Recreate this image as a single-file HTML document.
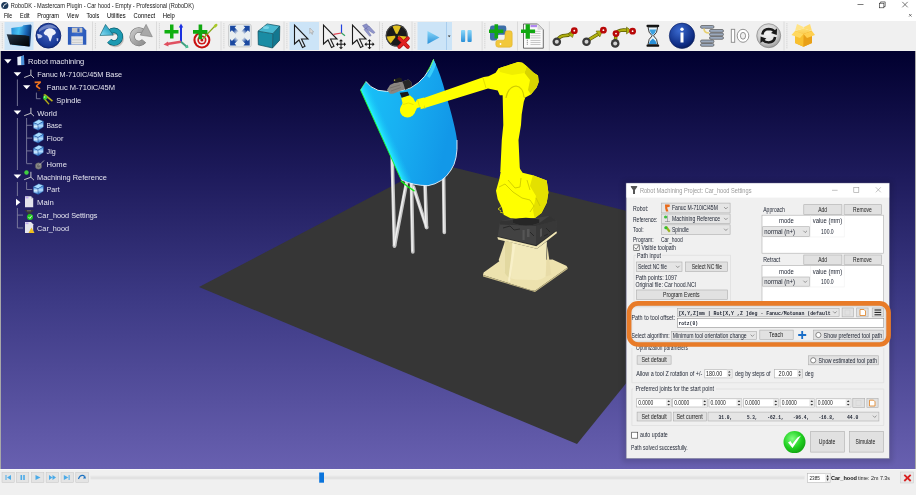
<!DOCTYPE html>
<html><head><meta charset="utf-8">
<style>
*{margin:0;padding:0;box-sizing:border-box}
html,body{width:916px;height:495px;overflow:hidden;background:#f0f0f0;font-family:"Liberation Sans",sans-serif}
svg{position:absolute;left:0;top:0;display:block;will-change:transform}
</style></head><body>
<svg width="916" height="495" viewBox="0 0 916 495">
<defs>
<linearGradient id="gVP" x1="0" y1="0" x2="0" y2="1"><stop offset="0" stop-color="#01002f"/><stop offset="0.3" stop-color="#1e1b5c"/><stop offset="0.6" stop-color="#3d3a85"/><stop offset="1" stop-color="#6860b0"/></linearGradient>

<linearGradient id="gFold" x1="0" y1="0.3" x2="1" y2="0.5"><stop offset="0" stop-color="#2a90d8"/><stop offset="0.35" stop-color="#48c4f4"/><stop offset="0.7" stop-color="#1a68b8"/><stop offset="1" stop-color="#0a2a60"/></linearGradient>
<linearGradient id="gFoldF" x1="0" y1="0" x2="1" y2="1"><stop offset="0" stop-color="#2a3848"/><stop offset="0.6" stop-color="#0c141c"/><stop offset="1" stop-color="#000"/></linearGradient>
<radialGradient id="gGlobe" cx="0.5" cy="0.45" r="0.6"><stop offset="0" stop-color="#3a5ab8"/><stop offset="0.75" stop-color="#1a3a98"/><stop offset="1" stop-color="#0c2470"/></radialGradient>
<linearGradient id="gFlop" x1="0" y1="0" x2="1" y2="0"><stop offset="0" stop-color="#2a58b8"/><stop offset="0.5" stop-color="#3a6ccc"/><stop offset="1" stop-color="#2a58b8"/></linearGradient>
<linearGradient id="gUndo" x1="0" y1="1" x2="1" y2="0"><stop offset="0" stop-color="#90e0f8"/><stop offset="0.5" stop-color="#40b0d0"/><stop offset="1" stop-color="#1a90a8"/></linearGradient>
<linearGradient id="gRedo" x1="0" y1="0" x2="1" y2="1"><stop offset="0" stop-color="#c8c8c8"/><stop offset="0.5" stop-color="#a8a8a8"/><stop offset="1" stop-color="#909090"/></linearGradient>
<linearGradient id="gCube" x1="0" y1="0" x2="1" y2="1"><stop offset="0" stop-color="#4cc0d8"/><stop offset="1" stop-color="#127890"/></linearGradient>
<radialGradient id="gInfo" cx="0.4" cy="0.3" r="0.75"><stop offset="0" stop-color="#3a6ad0"/><stop offset="0.8" stop-color="#0c2a80"/><stop offset="1" stop-color="#061a50"/></radialGradient>
<radialGradient id="gSync" cx="0.45" cy="0.4" r="0.65"><stop offset="0" stop-color="#ffffff"/><stop offset="0.6" stop-color="#d0d0d0"/><stop offset="1" stop-color="#909090"/></radialGradient>
<linearGradient id="gPlay" x1="0" y1="0" x2="0" y2="1"><stop offset="0" stop-color="#8ad8fa"/><stop offset="1" stop-color="#2a90d8"/></linearGradient>
<linearGradient id="gBox" x1="0" y1="0" x2="0" y2="1"><stop offset="0" stop-color="#ffe070"/><stop offset="1" stop-color="#f0a010"/></linearGradient>
<linearGradient id="gHood" x1="0" y1="0" x2="1" y2="0.3"><stop offset="0" stop-color="#18c4f8"/><stop offset="0.5" stop-color="#18b0f2"/><stop offset="1" stop-color="#1298e8"/></linearGradient>
<linearGradient id="gYel" x1="0" y1="0" x2="1" y2="1"><stop offset="0" stop-color="#ffff10"/><stop offset="1" stop-color="#e8e000"/></linearGradient>
<filter id="blur1" x="-10%" y="-10%" width="120%" height="120%"><feGaussianBlur stdDeviation="1"/></filter>
<filter id="blur2" x="-10%" y="-10%" width="120%" height="120%"><feGaussianBlur stdDeviation="2"/></filter>
<radialGradient id="gGreen" cx="0.4" cy="0.35" r="0.7"><stop offset="0" stop-color="#80ff80"/><stop offset="0.6" stop-color="#20d020"/><stop offset="1" stop-color="#10a010"/></radialGradient>
<radialGradient id="gFitA" cx="240" cy="35.6" r="11" gradientUnits="userSpaceOnUse"><stop offset="0.35" stop-color="#1a48a0" stop-opacity="0"/><stop offset="0.75" stop-color="#1a48a0" stop-opacity="1"/></radialGradient>
<linearGradient id="gCubeF" x1="0" y1="0" x2="0" y2="1"><stop offset="0" stop-color="#3a90e8"/><stop offset="0.5" stop-color="#d8f0ff"/><stop offset="1" stop-color="#2a78d8"/></linearGradient>
<linearGradient id="gCubeR" x1="0" y1="0" x2="0" y2="1"><stop offset="0" stop-color="#2a80e0"/><stop offset="0.5" stop-color="#b8e0ff"/><stop offset="1" stop-color="#1a68c8"/></linearGradient>
<linearGradient id="gHoodEdge" gradientUnits="userSpaceOnUse" x1="378.4" y1="130" x2="388" y2="125.7"><stop offset="0" stop-color="#28f4ff" stop-opacity="1"/><stop offset="1" stop-color="#18c0f8" stop-opacity="0"/></linearGradient>
</defs>
<rect x="0" y="0" width="916" height="21" fill="#fff"/>
<rect x="0" y="21" width="916" height="30" fill="#f0f0f0"/>
<text x="10.8" y="8.2" font-size="6.7" fill="#1a1a1a" font-family="Liberation Sans" textLength="183" lengthAdjust="spacingAndGlyphs">RoboDK - Mastercam Plugin - Car hood - Empty - Professional (RoboDK)</text>
<circle cx="4.8" cy="5.5" r="3.6" fill="#1e3a5a"/>
<path d="M3 7.5 Q4 3.5 6.8 3.6" stroke="#fff" stroke-width="0.9" fill="none"/>
<text x="3.9" y="18.1" font-size="6.5" fill="#000" font-family="Liberation Sans" textLength="8.3" lengthAdjust="spacingAndGlyphs">File</text>
<text x="20" y="18.1" font-size="6.5" fill="#000" font-family="Liberation Sans" textLength="9.5" lengthAdjust="spacingAndGlyphs">Edit</text>
<text x="37.3" y="18.1" font-size="6.5" fill="#000" font-family="Liberation Sans" textLength="21.7" lengthAdjust="spacingAndGlyphs">Program</text>
<text x="66.8" y="18.1" font-size="6.5" fill="#000" font-family="Liberation Sans" textLength="11.8" lengthAdjust="spacingAndGlyphs">View</text>
<text x="86.4" y="18.1" font-size="6.5" fill="#000" font-family="Liberation Sans" textLength="12.8" lengthAdjust="spacingAndGlyphs">Tools</text>
<text x="107" y="18.1" font-size="6.5" fill="#000" font-family="Liberation Sans" textLength="18.7" lengthAdjust="spacingAndGlyphs">Utilities</text>
<text x="133.6" y="18.1" font-size="6.5" fill="#000" font-family="Liberation Sans" textLength="21.6" lengthAdjust="spacingAndGlyphs">Connect</text>
<text x="162.7" y="18.1" font-size="6.5" fill="#000" font-family="Liberation Sans" textLength="12.1" lengthAdjust="spacingAndGlyphs">Help</text>
<g id="toolbar">
<!-- title bar controls -->
<g stroke="#222" stroke-width="0.6" fill="none">
<line x1="857.5" y1="4.5" x2="863.5" y2="4.5"/>
<rect x="879.3" y="3.2" width="4.6" height="4.6"/>
<path d="M880.6 3.2 L880.6 1.9 L885.2 1.9 L885.2 6.5 L883.9 6.5"/>
<path d="M902.3 1.9 L907.7 7.3 M907.7 1.9 L902.3 7.3"/>
<path d="M909 14 L911.6 16.6 M911.6 14 L909 16.6" stroke="#333" stroke-width="0.6"/>
</g>
<!-- grip -->
<line x1="2.3" y1="23.5" x2="2.3" y2="49" stroke="#a8a8a8" stroke-width="0.7" stroke-dasharray="0.7 1.3"/>
<!-- highlighted buttons -->
<rect x="4.5" y="22" width="29" height="28" fill="#cce4f7"/>
<rect x="289.5" y="22" width="29.5" height="28" fill="#cce4f7"/>
<rect x="417.5" y="22" width="34.5" height="28" fill="#cce4f7"/>
<line x1="446.5" y1="22" x2="446.5" y2="50" stroke="#a8cdee" stroke-width="1"/>
<!-- separators -->
<g stroke="#d6d6d6" stroke-width="0.8"><line x1="92.5" y1="21.5" x2="92.5" y2="50.5"/><line x1="156.5" y1="21.5" x2="156.5" y2="50.5"/><line x1="221" y1="21.5" x2="221" y2="50.5"/><line x1="284" y1="21.5" x2="284" y2="50.5"/><line x1="379.5" y1="21.5" x2="379.5" y2="50.5"/><line x1="412" y1="21.5" x2="412" y2="50.5"/><line x1="482.1" y1="21.5" x2="482.1" y2="50.5"/><line x1="517.5" y1="21.5" x2="517.5" y2="50.5"/><line x1="549.4" y1="21.5" x2="549.4" y2="50.5"/><line x1="784" y1="21.5" x2="784" y2="50.5"/></g>
<g stroke="#a8a8a8" stroke-width="0.7" stroke-dasharray="0.7 1.3"><line x1="95.4" y1="23.5" x2="95.4" y2="49"/><line x1="159.4" y1="23.5" x2="159.4" y2="49"/><line x1="223.9" y1="23.5" x2="223.9" y2="49"/><line x1="286.9" y1="23.5" x2="286.9" y2="49"/><line x1="382.4" y1="23.5" x2="382.4" y2="49"/><line x1="414.9" y1="23.5" x2="414.9" y2="49"/><line x1="484.8" y1="23.5" x2="484.8" y2="49"/><line x1="786.9" y1="23.5" x2="786.9" y2="49"/></g>
<!-- open folder -->
<path d="M11.3 28 L22.2 26.5 L23.4 25.2 L30.7 24.6 L31.6 25.8 L30.1 46.5 L12 45 Z" fill="url(#gFold)"/>
<path d="M6.7 34.3 L25.2 35.2 L29.5 36.2 L29.2 46.5 L10.1 44.6 Z" fill="url(#gFoldF)"/>
<!-- globe -->
<circle cx="48.4" cy="35.7" r="12.4" fill="url(#gGlobe)" stroke="#0c2470" stroke-width="0.9"/>
<path d="M39 29.5 Q44 24.5 50 24.5 Q55 25 57.5 29 Q52 27 46 28.5 Q42 29.5 39 32Z" fill="#b8c4e8" opacity="0.5"/>
<path d="M43.5 33 L46 29.5 L49 28.3 L52 28.6 L55 30.5 L56 33 L54.5 34.5 L52.5 35.5 L51.5 38.5 L50.5 41.5 L49.5 41 L48.5 37.5 L47 35.5 L45 35 Z" fill="#eef0fa"/>
<path d="M37 33.8 L40.5 34.5 L42.6 36 L41 38 L38 38.5 Z" fill="#c8d0f0"/>
<path d="M56.6 38 L58.4 38.5 L58 41.2 L56.8 41Z" fill="#c0c8ec"/>
<!-- floppy -->
<path d="M67.9 27.1 L83 27.1 L86.3 30.5 L86.3 44.8 L67.9 44.8 Z" fill="url(#gFlop)"/>
<rect x="71.9" y="27.7" width="10.4" height="4.9" fill="#c4c4c4"/>
<rect x="77.4" y="28.3" width="2.1" height="3.7" fill="#2c5cc0"/>
<rect x="71.3" y="36.3" width="11.6" height="8.2" fill="#e4e4e4"/>
<rect x="71.3" y="39.5" width="11.6" height="0.8" fill="#c8c8c8"/>
<rect x="71.3" y="42" width="11.6" height="0.8" fill="#c8c8c8"/>
<!-- undo -->
<path d="M110.2 33 A6.35 6.35 0 1 1 109.7 41.9" fill="none" stroke="#7a6a60" stroke-width="5" opacity="0.35" transform="translate(0.7 0.8)"/>
<path d="M109.5 32.2 A6.35 6.35 0 1 1 109.2 40.9" fill="none" stroke="#0a5a6a" stroke-width="5.6"/>
<path d="M109.5 32.2 A6.35 6.35 0 1 1 109.2 40.9" fill="none" stroke="#1c9ab2" stroke-width="4.4"/>
<path d="M105.5 24.4 L100 35.5 L113.3 35.1 Z" fill="url(#gUndo)" stroke="#0a5a6a" stroke-width="0.6"/>
<!-- redo -->
<path d="M143.6 32 A6.7 6.7 0 1 0 144 41.1" fill="none" stroke="#707070" stroke-width="5.4"/>
<path d="M143.6 32 A6.7 6.7 0 1 0 144 41.1" fill="none" stroke="url(#gRedo)" stroke-width="4.4"/>
<path d="M146.1 24.4 L152.3 36.8 L140.3 35.1 Z" fill="#a8a8a8" stroke="#7a7a7a" stroke-width="0.6"/>
<!-- add frame -->
<path d="M170 24.5 h3.5 v5.5 h5 v3.5 h-5 v5 h-3.5 v-5 h-5.5 v-3.5 h5.5 Z" fill="#10b010"/>
<line x1="181" y1="42" x2="181" y2="27" stroke="#1a30e0" stroke-width="2"/>
<path d="M178.8 27.5 L181 23.5 L183.2 27.5 Z" fill="#1a30e0"/>
<path d="M181 41.8 L167 44" stroke="#e05060" stroke-width="2.4"/>
<path d="M168 41.5 L163.5 44.5 L168.5 46.5 Z" fill="#e05060"/>
<path d="M181 41.8 L186.5 46.5" stroke="#40a080" stroke-width="2"/><path d="M185 48.2 L188.5 47.8 L187.8 44.5Z" fill="#40c090"/>
<!-- add target -->
<circle cx="201.9" cy="40" r="8.5" fill="#c81010"/>
<circle cx="201.9" cy="40" r="6.4" fill="#f4f4f4"/>
<circle cx="201.9" cy="40" r="4.6" fill="#d01818"/>
<circle cx="201.9" cy="40" r="2.9" fill="#f4f4f4"/>
<circle cx="201.9" cy="40" r="1.5" fill="#c01010"/>
<line x1="203" y1="38.5" x2="214" y2="27" stroke="#88a818" stroke-width="1.2"/>
<ellipse cx="215.5" cy="25.8" rx="2.4" ry="1.4" fill="#a8c828" transform="rotate(-45 215.5 25.8)"/>
<path d="M198.6 24.5 h3.6 v5.6 h5.2 v3.6 h-5.2 v5.5 h-3.6 v-5.5 h-5.6 v-3.6 h5.6 Z" fill="#10a810"/>
<!-- fit all -->
<rect x="228.6" y="24.3" width="22.6" height="22.6" rx="1.8" fill="#e8eef0" stroke="#bcbcbc" stroke-width="0.7"/>
<g fill="url(#gFitA)">
<path d="M230.1 25.8 L236.4 25.8 L234.6 27.6 L238.5 31.5 L235.8 34.2 L231.9 30.3 L230.1 32.1 Z"/>
<path d="M249.7 25.8 L243.4 25.8 L245.2 27.6 L241.3 31.5 L244 34.2 L247.9 30.3 L249.7 32.1 Z"/>
<path d="M230.1 45.4 L236.4 45.4 L234.6 43.6 L238.5 39.7 L235.8 37 L231.9 40.9 L230.1 39.1 Z"/>
<path d="M249.7 45.4 L243.4 45.4 L245.2 43.6 L241.3 39.7 L244 37 L247.9 40.9 L249.7 39.1 Z"/>
</g>
<!-- cube -->
<path d="M258 31.2 L267.1 23.9 L279.8 26.1 L272.8 33.7 Z" fill="#48b8d0"/>
<path d="M258 31.2 L272.8 33.7 L272.5 48 L258.3 44.8 Z" fill="#1a8ca4"/>
<path d="M272.8 33.7 L279.8 26.1 L279.5 40.4 L272.5 48 Z" fill="#137890"/>
<path d="M258 31.2 L267.1 23.9 L279.8 26.1 L279.5 40.4 L272.5 48 L258.3 44.8 Z M258 31.2 L272.8 33.7 L279.8 26.1 M272.8 33.7 L272.5 48" fill="none" stroke="#0a4a5a" stroke-width="0.7"/>
<ellipse cx="266" cy="27.5" rx="3" ry="1.5" fill="#8ae0f0" opacity="0.7"/>
<!-- select arrows -->
<g fill="#f4f4f4" fill-opacity="0.35" stroke="#1a1a1a" stroke-width="1.1">
<path d="M294.5 25 L294.5 44 L299 40 L302.5 47.5 L305 46.3 L301.5 39 L308 39 Z"/>
<path d="M323.5 25 L323.5 44 L328 40 L331.5 47.5 L334 46.3 L330.5 39 L337 39 Z"/>
<path d="M352.5 25 L352.5 44 L357 40 L360.5 47.5 L363 46.3 L359.5 39 L366 39 Z"/>
</g>
<path d="M309.8 28 L309.8 33.5 L311 32.3 L312 34.5 L312.8 34 L312 32 L313.8 32 Z" fill="#ddd" stroke="#999" stroke-width="0.5"/>
<line x1="341.5" y1="24.5" x2="341.5" y2="33" stroke="#2040e0" stroke-width="1.2"/>
<line x1="341.5" y1="33" x2="333.5" y2="34.3" stroke="#e04050" stroke-width="1.2"/>
<line x1="341.5" y1="33" x2="345" y2="35.8" stroke="#30a060" stroke-width="1.2"/>
<g stroke="#111" stroke-width="1"><path d="M337.5 44.2 h7 M341 40.7 v7"/><path d="M366 44.2 h7 M369.5 40.7 v7"/></g>
<g fill="#111"><path d="M341 39.2 l-2 2 h4z M341 49.2 l-2 -2 h4z M336 44.2 l2 -2 v4z M346 44.2 l-2 -2 v4z"/>
<path d="M369.5 39.2 l-2 2 h4z M369.5 49.2 l-2 -2 h4z M364.5 44.2 l2 -2 v4z M374.5 44.2 l-2 -2 v4z"/></g>
<path d="M362.5 25.5 L366.5 23.8 L369 26.5 L365.5 29.5 Z" fill="#8a90c8" stroke="#5a5e98" stroke-width="0.4"/><path d="M365.5 28.5 L369 26 L375 32.5 L373.5 33.5 Z" fill="#9096cc" stroke="#5a5e98" stroke-width="0.4"/><path d="M364 29.5 L366.5 28.5 L371.2 35.5 L369.7 36.3 Z" fill="#9096cc" stroke="#5a5e98" stroke-width="0.4"/>
<!-- radiation -->
<circle cx="396.7" cy="35.6" r="11" fill="#1a1a1a"/>
<circle cx="396.7" cy="35.6" r="10.5" fill="none" stroke="#555" stroke-width="0.8"/>
<g fill="#e0c020">
<path d="M396.7 35.6 L392.5 26.5 A9.5 9.5 0 0 1 400.9 26.5 Z"/>
<path d="M396.7 35.6 L386.9 36.5 A9.5 9.5 0 0 0 390.8 43.2 Z"/>
<path d="M396.7 35.6 L406.5 36.5 A9.5 9.5 0 0 1 402.6 43.2 Z"/>
</g>
<circle cx="396.7" cy="35.6" r="1.8" fill="#1a1a1a"/>
<path d="M399.3 38.3 L407.8 46.8 M407.8 38.3 L399.3 46.8" stroke="#a00000" stroke-width="3.8" stroke-linecap="round"/>
<path d="M399.3 38.3 L407.8 46.8 M407.8 38.3 L399.3 46.8" stroke="#e02020" stroke-width="2.8" stroke-linecap="round"/>
<!-- play -->
<path d="M427.5 31 L439.5 37.5 L427.5 44 Z" fill="url(#gPlay)"/>
<path d="M447.8 35.5 L450.6 35.5 L449.2 37.2 Z" fill="#333"/>
<!-- pause -->
<rect x="461" y="30" width="4.2" height="12" rx="1" fill="url(#gPlay)"/>
<rect x="467.5" y="30" width="4.2" height="12" rx="1" fill="url(#gPlay)"/>
<!-- python -->
<path d="M492.5 25.6 L504 25.6 Q506.3 25.6 506.3 28 L506.3 32.6 Q506.3 34.8 504 34.8 L499 34.8 Q497.3 35 497.3 37 L497.3 38.5 Q497.3 40.6 495 40.6 L492.2 40.6 Q490 40.6 490 38.3 L490 28 Q490 25.6 492.5 25.6Z" fill="#3c6ea8"/>
<path d="M509.8 47.2 L498.3 47.2 Q495.8 47.2 495.8 44.8 L495.8 42.4 Q495.8 40.2 498 40.2 L503.3 40.2 Q505 40 505 38 L505 33.2 Q505 30.8 507.3 30.8 L510 30.8 Q512.2 30.8 512.2 33.1 L512.2 44.8 Q512.2 47.2 509.8 47.2Z" fill="#f2c83a" stroke="#d8a820" stroke-width="0.5"/>
<circle cx="500.5" cy="44" r="0.9" fill="#fff"/>
<path d="M494.5 24.3 h3.6 v5.2 h5.3 v3.6 h-5.3 v5.3 h-3.6 v-5.3 h-5.5 v-3.6 h5.5 Z" fill="#10a810"/>
<!-- program add -->
<path d="M523.5 24 L537.5 24 L543.3 29.8 L543.3 48.2 L523.5 48.2 Z" fill="#fafafa" stroke="#333" stroke-width="0.7"/>
<path d="M537.5 24 L537.5 29.8 L543.3 29.8Z" fill="#d8d8d8"/>
<rect x="530.5" y="25" width="6.5" height="2.2" fill="#b088f0"/>
<g fill="#c8c8c8"><rect x="530.5" y="30.8" width="10" height="1"/><rect x="530.5" y="33" width="10" height="1"/><rect x="530.5" y="35.2" width="10" height="1"/><rect x="530.5" y="37.4" width="10" height="1"/><rect x="530.5" y="40" width="10" height="1"/><rect x="530.5" y="42" width="10" height="1"/><rect x="530.5" y="44" width="10" height="1"/></g>
<g fill="#777"><rect x="526.8" y="39.8" width="1" height="1"/><rect x="526.8" y="41.8" width="1" height="1"/><rect x="526.8" y="43.7" width="1" height="1"/></g>
<path d="M525.6 24.3 h4.3 v5.2 h5.2 v3.6 h-5.2 v5.6 h-4.3 v-5.6 h-4.6 v-3.6 h4.6 Z" fill="#10a810"/>
<!-- moveJ -->
<path d="M557.5 40 Q560 35.5 565.5 35.5 Q569 35.5 571.5 33 L573 31.5" fill="none" stroke="#5a5a00" stroke-width="3.4"/>
<path d="M557.5 40 Q560 35.5 565.5 35.5 Q569 35.5 571.5 33 L573 31.5" fill="none" stroke="#b0b010" stroke-width="2.2"/>
<path d="M568.5 34.5 L574.8 31 L572.5 37.5 Z" fill="#b0b010" stroke="#5a5a00" stroke-width="0.5"/>
<circle cx="556.8" cy="41.7" r="4.3" fill="#3a3a3a"/><circle cx="556.8" cy="41.7" r="2" fill="#d4d4d4"/>
<circle cx="574.3" cy="30.7" r="3.4" fill="#b80808"/><circle cx="574.3" cy="30.7" r="0.9" fill="#fff"/>
<!-- moveL -->
<line x1="587.5" y1="40.5" x2="599.5" y2="33.2" stroke="#5a5a00" stroke-width="3.4"/>
<line x1="587.5" y1="40.5" x2="599.5" y2="33.2" stroke="#b0b010" stroke-width="2.2"/>
<path d="M596 31 L602.5 30.8 L599.8 37 Z" fill="#b0b010" stroke="#5a5a00" stroke-width="0.5"/>
<circle cx="586.5" cy="41.7" r="4.3" fill="#3a3a3a"/><circle cx="586.5" cy="41.7" r="2" fill="#d4d4d4"/>
<circle cx="603.4" cy="30.2" r="3.4" fill="#b80808"/><circle cx="603.4" cy="30.2" r="0.9" fill="#fff"/>
<!-- moveC -->
<path d="M615.5 41 L615.8 34 Q617 30.5 623.5 30 L628.5 30.3" fill="none" stroke="#5a5a00" stroke-width="3.4"/>
<path d="M615.5 41 L615.8 34 Q617 30.5 623.5 30 L628.5 30.3" fill="none" stroke="#b0b010" stroke-width="2.2"/>
<path d="M626.5 27 L631 30.5 L626.5 34 Z" fill="#b0b010" stroke="#5a5a00" stroke-width="0.5"/>
<circle cx="615.2" cy="43.4" r="4.3" fill="#3a3a3a"/><circle cx="615.2" cy="43.4" r="2" fill="#d4d4d4"/>
<circle cx="616" cy="33.6" r="3.4" fill="#b80808"/><circle cx="616" cy="33.6" r="0.9" fill="#fff"/>
<circle cx="632.6" cy="31.2" r="3.4" fill="#b80808"/><circle cx="632.6" cy="31.2" r="0.9" fill="#fff"/>
<!-- hourglass -->
<rect x="646.5" y="24.8" width="12.7" height="2.2" rx="0.8" fill="#111"/>
<rect x="646.5" y="44.6" width="12.7" height="2.2" rx="0.8" fill="#111"/>
<path d="M648 27 L657.7 27 Q657.5 33 653.5 35.8 Q657.5 38.6 657.7 44.6 L648 44.6 Q648.2 38.6 652.2 35.8 Q648.2 33 648 27 Z" fill="#e8f4fa" stroke="#222" stroke-width="0.9"/>
<path d="M649.5 29.5 L656.2 29.5 Q655.5 33 652.85 35 Q650.2 33 649.5 29.5Z" fill="#3aa0e0"/>
<path d="M652.85 38.5 Q656.5 41 656.8 44 L648.9 44 Q649.2 41 652.85 38.5Z" fill="#2a90d8"/>
<!-- info -->
<circle cx="682" cy="35.8" r="12.7" fill="url(#gInfo)" stroke="#0a1f60" stroke-width="0.6"/>
<circle cx="682" cy="29.3" r="1.7" fill="#fff"/>
<rect x="680.5" y="32.5" width="3" height="10" fill="#fff"/>
<!-- stack -->
<g fill="#9aa8bc" stroke="#555" stroke-width="0.7">
<rect x="700.5" y="25.5" width="13.5" height="2.8" rx="1.4"/>
<rect x="709.5" y="29.5" width="14" height="2.8" rx="1.4"/>
<rect x="709.5" y="33" width="14" height="2.8" rx="1.4"/>
<rect x="709.5" y="36.5" width="14" height="2.8" rx="1.4"/>
<rect x="700.5" y="40" width="13.5" height="2.8" rx="1.4"/>
<rect x="700.5" y="43.5" width="13.5" height="2.8" rx="1.4"/>
</g>
<path d="M704 28.5 Q704 33 709 33" fill="none" stroke="#e8d070" stroke-width="1.6"/>
<!-- IO -->
<g fill="#fff" stroke="#888" stroke-width="0.9">
<rect x="731.3" y="29.3" width="3.4" height="13" />
<ellipse cx="743" cy="35.8" rx="5.8" ry="6.5"/>
</g>
<ellipse cx="743" cy="35.8" rx="2.6" ry="3.4" fill="#f0f0f0" stroke="#888" stroke-width="0.9"/>
<!-- sync -->
<circle cx="768.7" cy="35.7" r="12" fill="url(#gSync)" stroke="#7a7a7a" stroke-width="0.6"/>
<circle cx="768.7" cy="35.7" r="8.5" fill="#ececec" opacity="0.6"/>
<path d="M762.3 34.5 Q763 29.3 768.8 29 Q772.5 29 774.6 31.5" fill="none" stroke="#1a1a1a" stroke-width="2.6"/>
<path d="M777 28.5 L776.8 35 L771 33 Z" fill="#1a1a1a"/>
<path d="M775.1 37 Q774.4 42.2 768.6 42.5 Q764.9 42.5 762.8 40" fill="none" stroke="#1a1a1a" stroke-width="2.6"/>
<path d="M760.4 43 L760.6 36.5 L766.4 38.5 Z" fill="#1a1a1a"/>
<!-- box -->
<path d="M795 31 L803.5 28.5 L812 31 L812 43 L803.5 46.7 L795 43 Z" fill="url(#gBox)"/>
<path d="M795 31 L803.5 34 L803.5 46.7 L795 43Z" fill="#f8c030"/>
<path d="M803.5 34 L812 31 L812 43 L803.5 46.7Z" fill="#e8a018"/>
<path d="M795 31 L791.5 35 L800 38 L803.5 34Z" fill="#ffd860"/>
<path d="M812 31 L815 35 L807 38 L803.5 34Z" fill="#ffd050"/>
<path d="M795 31 L797 24 L803.5 27 L803.5 28.5Z" fill="#ffe488"/>
<path d="M812 31 L810 24 L804 27 L803.5 28.5Z" fill="#ffdc70"/>

</g>
<rect x="0" y="51" width="916" height="418" fill="#a8a8a8"/>
<rect x="1" y="51" width="914" height="418" fill="url(#gVP)"/>
<polygon points="199,287 436,163 742,240 577,444" fill="#363636"/>
<!-- stand legs -->
<g stroke-linecap="round" fill="none">
<g stroke="#c4c4c4" stroke-width="3.6">
<line x1="392" y1="150" x2="394.5" y2="246"/>
<line x1="406.5" y1="183" x2="394.5" y2="246"/>
<line x1="411.5" y1="183" x2="412.8" y2="252"/>
<line x1="413.5" y1="187" x2="426.7" y2="227.5"/>
<line x1="425" y1="183" x2="426.5" y2="227.5"/>
<line x1="443.5" y1="170" x2="444.3" y2="232.5"/>
</g>
<g stroke="#f0f0f0" stroke-width="1.4">
<line x1="391.6" y1="150" x2="394" y2="245"/>
<line x1="406" y1="183" x2="394.2" y2="245"/>
<line x1="411" y1="183" x2="412.3" y2="251"/>
<line x1="413.2" y1="187" x2="426.2" y2="227"/>
<line x1="424.6" y1="183" x2="426" y2="227"/>
<line x1="443.1" y1="170" x2="443.9" y2="232"/>
</g>
</g>
<!-- hood -->
<path d="M360.5 90 L366 81.5 Q370 87.5 378 90.3 Q395 93.5 411 87.7 Q427 79 433.6 59.4 Q441 75 446 95 Q455 125 457 140 Q458 160 451 170 Q443 183 428 185.7 Q413 185.5 401.2 179.8 Z" fill="url(#gHood)"/>
<path d="M360.5 90 L366 81.5 Q370 87.5 378 90.3 L388 91.2 L412 181.5 L401.2 179.8 Z" fill="url(#gHoodEdge)"/>
<path d="M427 76 Q431 70 433.6 59.4 L436 64.5 Q433 73 429.5 78Z" fill="#40d8fc" opacity="0.8"/>
<path d="M366 81.5 Q370 87.5 378 90.3 Q395 93.5 411 87.7 Q427 79 433.6 59.4" fill="none" stroke="#f4fff8" stroke-width="0.9"/>
<path d="M427 72 Q431 66 433.6 59.4" fill="none" stroke="#30ff30" stroke-width="0.8"/>
<path d="M360.5 90 L401.2 179.8" fill="none" stroke="#20f020" stroke-width="0.9"/>
<path d="M360.5 90 L366 81.5" fill="none" stroke="#60ff60" stroke-width="0.7"/>
<path d="M401.2 179.8 Q413 185.5 428 185.7 Q443 183 451 170 Q458 160 457 140" fill="none" stroke="#e8f4ff" stroke-width="0.9"/>
<path d="M400.8 180.8 L407 186 L414.5 191.2" stroke="#10f010" stroke-width="1.4" fill="none"/>
<!-- robot lower arm -->
<path d="M502.6 92 L503.3 125 L501.8 140 L500.3 172 L520 173 L518.5 140 L521 125 L521.7 114.4 L523.8 101.7 L525.3 97.4 Z" fill="#ffff00"/>
<!-- forearm -->
<path d="M419.5 99.5 L483.8 77.1 L488.5 76.2 L495.6 72.7 L498.4 68.4 L502.6 67 L518.2 62.1 L522.4 62.8 L526.7 66.3 L533.7 72.7 L538 75.5 L538.7 81.9 L536.6 87.5 L530.9 94.6 L525.3 97.4 L502.6 95.3 L499.8 95.3 L497.7 90.4 L488 88.6 L420.7 109.2 Z" fill="#ffff00"/>
<path d="M526.7 66.3 L533.7 72.7 L538 75.5 L538.7 81.9 L536.6 87.5 L530.9 94.6 L528 90 L530 80 L524.5 73 Z" fill="#d8d400"/>
<path d="M498.4 68.4 L502.6 67 L518.2 62.1 L522.4 62.8 L526.7 66.3 L524.5 73 L512 75 L500 72Z" fill="#f0ee00"/>
<path d="M506 98 Q508 87 516 86 Q523 87 524 97" fill="none" stroke="#d0cc00" stroke-width="1.2"/>
<path d="M483 78 L486 88" stroke="#d8d400" stroke-width="0.8"/>
<path d="M422 100 L425 109" stroke="#d8d400" stroke-width="0.8"/>
<!-- wrist -->
<path d="M401.2 97.8 L409.8 95.2 L413.3 98.3 L415.3 102.3 L417.3 99.3 L424 97.5 L424 106.3 L417 108 L414 114 L408 117 L402 115 L400.5 109 L402.5 103 Z" fill="#ffff00"/>
<circle cx="407.5" cy="110" r="7.6" fill="#ffff00"/>
<path d="M403 104.5 Q408.5 101.5 413.5 104.5" fill="none" stroke="#e0dc00" stroke-width="0.7"/>
<path d="M417.5 99.5 L419.5 106.5" stroke="#e0dc00" stroke-width="0.7"/>
<!-- spindle -->
<path d="M387 89.7 L390 85.1 L394.1 83.1 L402.2 81.6 L408.2 79.6 L411.3 82.1 L411.8 86.6 L405.2 89.7 L404.2 89.2 L393.1 93.7 L390 93.7 Z" fill="#8a8580"/>
<path d="M402.2 81.6 L408.2 79.6 L411.3 82.1 L411.8 86.6 L405.2 89.7 L403.5 84Z" fill="#262626"/>
<path d="M393.1 80.1 L399.2 77.6 L401.7 78.6 L402.2 81.6 L394.1 83.1Z" fill="#1e1e1e"/>
<path d="M390 88 L400 85 M391 91 L401 87.5" stroke="#6a6560" stroke-width="0.6"/>
<circle cx="394.6" cy="80.1" r="0.7" fill="#e8f060"/>
<path d="M399.7 92.7 L407.7 91.7 L409.3 95.2 L401.7 97.8 Z" fill="#1a1a1a"/>
<!-- base yellow -->
<path d="M502 165 L499.4 178.7 L496 190.8 L497.7 199.3 L502 207.9 L503.7 214.8 L510.6 218.2 L524.3 219.9 L534.6 218.2 L541.5 213.1 L546.7 202.8 L548.4 192.5 L546.7 180.5 L532.9 175.3 L522.6 172.7 L517.5 165 Z" fill="#ffff00"/>
<path d="M532.9 175.3 L546.7 180.5 L548.4 192.5 L546.7 202.8 L541.5 213.1 L534.6 218.2 L533 210 L536 196 L530 186 Z" fill="#e4e000"/>
<path d="M499 187 L505 184 L513 192 L522 198 L530 200 L534 206 L530 212 M508 180 L515 188 L520 187 L521 178 M527 180 L530 190 M536 198 L540 206" fill="none" stroke="#c8c400" stroke-width="0.8"/>
<path d="M502 206 L498 209 L501 211 M500 212 L503 213" stroke="#e8e400" stroke-width="0.8" fill="none"/>
<!-- J1 black -->
<path d="M500.1 221.3 L512 218.5 L530 219 L549.7 215.7 L556.6 220.5 L556.2 231 L536 245.5 L497.6 236.7 Z" fill="#424242"/>
<path d="M536 226 L556.6 220.5 L556.2 231 L536 245.5 Z" fill="#383838"/>
<path d="M512.6 219.5 Q526 216 539.2 219.5 L539.2 223 Q526 228 512.6 223 Z" fill="#262626"/>
<path d="M500.1 221.3 L512.6 220 L512.6 223 Q526 228 539.2 223 L549.7 215.7 L556.6 220.5 L536 226 L500 224.5Z" fill="#333"/>
<g fill="#555"><rect x="522.5" y="230" width="2.2" height="10"/><rect x="527" y="229" width="2.5" height="8"/><rect x="540" y="229" width="2" height="8" transform="skewY(-30) translate(0 312)"/></g>
<path d="M503 228 L510 226 L514 230 L520 229 M530 232 L534 236 M546 228 L550 232 M544 236 L548 234" fill="none" stroke="#262626" stroke-width="0.9"/>
<path d="M497.6 236.7 L536 245.5 L556.2 231" fill="none" stroke="#2a2a2a" stroke-width="0.8"/>
<!-- pedestal -->
<path d="M483.6 272.6 L499.3 261.3 L552.6 259.4 L566.3 265.7 L567.6 267.6 L535 290.8 L531.3 290.2 L483 275.1 Z" fill="#ede2ae"/>
<path d="M483 275.1 L531.3 290.2 L535 290.8 L567.6 267.6 L567.6 269 L535 292 L483 276.5Z" fill="#c8bc88"/>
<path d="M504.9 241 L536.9 248.8 L546.9 241.3 L545.7 276.4 Q540 280.5 534.4 280.1 L515.6 279.5 Q508 278 504.3 272.6 Z" fill="#f2e9ba"/>
<path d="M504.9 241 L512 242.8 L511 279 Q507 277 504.3 272.6Z" fill="#e2d8a0"/>
<path d="M498.7 260 L505 241.3 L505 274 Z" fill="#ece2b0"/>
<path d="M515.6 244 L510 282 L508 281 L513 243.5Z" fill="#f8f0c8"/>
<path d="M547.5 246.3 L551.3 275.1 L545.7 276.4Z" fill="#e8dca8"/>
<path d="M497.4 236.9 L536.3 246.3 L556.3 231.3 L557 233.1 L536.9 248.8 L498 239.4 Z" fill="#f0e6b4"/>
<g id="tree">
<!-- tree lines -->
<g stroke="#8c8ca8" stroke-width="0.8" fill="none">
<line x1="17.4" y1="79.5" x2="17.4" y2="106"/>
<line x1="17.4" y1="118" x2="17.4" y2="170"/>
<line x1="17.4" y1="182" x2="17.4" y2="196"/>
<path d="M17.4 208 L17.4 228 L23 228"/>
<line x1="17.4" y1="215.1" x2="23" y2="215.1"/>
<path d="M36.4 92.6 L36.4 98.7 L40.6 98.7"/>
<line x1="26.6" y1="118" x2="26.6" y2="163.5"/>
<line x1="26.6" y1="125.3" x2="32.2" y2="125.3"/>
<line x1="26.6" y1="138.1" x2="32.2" y2="138.1"/>
<line x1="26.6" y1="150.9" x2="32.2" y2="150.9"/>
<line x1="26.6" y1="163.7" x2="32.2" y2="163.7"/>
<path d="M26.6 182 L26.6 189.5 L32.2 189.5"/>
</g>
<!-- triangles -->
<g fill="#fff">
<path d="M4.2 59.3 L11.5 59.3 L7.85 63.5Z"/>
<path d="M13.6 72.3 L21.2 72.3 L17.4 76.3Z"/>
<path d="M23 85.3 L30.3 85.3 L26.65 89.3Z"/>
<path d="M13.6 110.6 L21.2 110.6 L17.4 114.6Z"/>
<path d="M13.6 174.6 L21.2 174.6 L17.4 178.6Z"/>
<path d="M16 198.8 L20.4 202.3 L16 205.8Z"/>
</g>
<!-- station icon -->
<path d="M17.3 57 L24 55.6 L24.2 65 L17.5 65.2Z" fill="#e8f0fa"/>
<path d="M21 56.2 L24 55.6 L24.2 65 L21.2 65.1Z" fill="#4a90d8"/>
<!-- frame icons -->
<g stroke="#d8d8d8" stroke-width="0.9" fill="none">
<path d="M30.9 69.6 L30.9 75 L24.2 77.5 M30.9 75 L34 78"/>
<path d="M30.9 107.8 L30.9 113.2 L24.2 115.7 M30.9 113.2 L34 116.2"/>
<path d="M30.9 171.8 L30.9 177.2 L24.2 179.7 M30.9 177.2 L34 180.2"/>
</g>
<circle cx="26.5" cy="172.5" r="2.2" fill="#40d040"/>
<!-- robot icon -->
<path d="M34.5 81.5 L40.8 81.3 L41 82.8 L37.5 85.8 L40.5 88.2 L39.8 89.6 L36 87 L35.8 85.6 L38.3 83 L34.8 83.2Z" fill="#ec7420"/>
<ellipse cx="39" cy="90.5" rx="1.6" ry="0.8" fill="#402010"/>
<!-- spindle icon -->
<path d="M43.4 95 L45 94 L52.9 100.6 L52 101.6 Z" fill="#c8c020" stroke="#8a8010" stroke-width="0.4"/>
<path d="M44 99.3 L45.2 98.8 L49.3 103.8 L48.6 104.5 Z" fill="#c8c020" stroke="#8a8010" stroke-width="0.4"/>
<circle cx="45.1" cy="97.7" r="2.1" fill="#30d030"/>
<circle cx="44.6" cy="97" r="0.8" fill="#c0ffc0"/>
<!-- cube icons -->
<g id="cube">
<path d="M33.3 122.6 L38.8 119.6 L43.5 121.3 L38 124.6 Z" fill="#a8dcff" stroke="#1a4a90" stroke-width="0.35"/>
<path d="M33.3 122.6 L38 124.6 L38.2 130.3 L33.5 128.2 Z" fill="url(#gCubeF)" stroke="#1a4a90" stroke-width="0.35"/>
<path d="M38 124.6 L43.5 121.3 L43.4 127 L38.2 130.3 Z" fill="url(#gCubeR)" stroke="#1a4a90" stroke-width="0.35"/>
</g>
<use href="#cube" y="12.8"/>
<use href="#cube" y="25.6"/>
<use href="#cube" y="64.2"/>
<!-- home icon -->
<circle cx="38.5" cy="166" r="3.2" fill="#888" stroke="#555" stroke-width="0.5"/>
<circle cx="38.5" cy="166" r="1.5" fill="#666"/>
<line x1="39" y1="165.5" x2="44" y2="160.5" stroke="#ccc" stroke-width="0.7"/>
<!-- main program icon -->
<path d="M25 196.3 L31 196.3 L33.2 198.5 L33.2 207.3 L25 207.3Z" fill="#e4e4ec"/><rect x="25.5" y="196.8" width="3" height="1.6" fill="#c0a8f0"/>
<path d="M31 196.5 L31 198.5 L33 198.5" fill="#b0b0c8"/>
<!-- settings icon -->
<path d="M24.4 210 L34 210 L30.5 213.5 L30.5 216 L28 216 L28 213.5Z" fill="#3a3a3a"/><path d="M27 210.8 L31 210.8" stroke="#aaa" stroke-width="0.5"/>
<circle cx="30" cy="217" r="3" fill="#20c820"/>
<path d="M28.4 216.9 L29.8 218.4 L31.8 215.6" fill="none" stroke="#fff" stroke-width="0.8"/>
<!-- car_hood program icon -->
<path d="M25 222 L31 222 L33.2 224.2 L33.2 233 L25 233Z" fill="#e4e4ec"/><rect x="25.5" y="222.5" width="3" height="1.6" fill="#c0a8f0"/>
<path d="M28.5 233 L31.5 227.5 L34.5 233Z" fill="#f0c020"/>
</g>
<text x="28" y="64.3" font-size="7.6" fill="#e6e6f0" font-family="Liberation Sans" textLength="56.3" lengthAdjust="spacingAndGlyphs">Robot machining</text>
<text x="37.3" y="77.1" font-size="7.6" fill="#e6e6f0" font-family="Liberation Sans" textLength="84.8" lengthAdjust="spacingAndGlyphs">Fanuc M-710iC/45M Base</text>
<text x="46.8" y="89.9" font-size="7.6" fill="#e6e6f0" font-family="Liberation Sans" textLength="68.2" lengthAdjust="spacingAndGlyphs">Fanuc M-710iC/45M</text>
<text x="56.3" y="102.7" font-size="7.6" fill="#e6e6f0" font-family="Liberation Sans" textLength="24.9" lengthAdjust="spacingAndGlyphs">Spindle</text>
<text x="37.3" y="115.5" font-size="7.6" fill="#e6e6f0" font-family="Liberation Sans" textLength="19.7" lengthAdjust="spacingAndGlyphs">World</text>
<text x="46.6" y="128.3" font-size="7.6" fill="#e6e6f0" font-family="Liberation Sans" textLength="15.4" lengthAdjust="spacingAndGlyphs">Base</text>
<text x="46.6" y="141.1" font-size="7.6" fill="#e6e6f0" font-family="Liberation Sans" textLength="16.8" lengthAdjust="spacingAndGlyphs">Floor</text>
<text x="46.6" y="153.9" font-size="7.6" fill="#e6e6f0" font-family="Liberation Sans" textLength="9.1" lengthAdjust="spacingAndGlyphs">Jig</text>
<text x="46.6" y="166.7" font-size="7.6" fill="#e6e6f0" font-family="Liberation Sans" textLength="20.3" lengthAdjust="spacingAndGlyphs">Home</text>
<text x="37.1" y="179.5" font-size="7.6" fill="#e6e6f0" font-family="Liberation Sans" textLength="69.7" lengthAdjust="spacingAndGlyphs">Machining Reference</text>
<text x="46.6" y="192.3" font-size="7.6" fill="#e6e6f0" font-family="Liberation Sans" textLength="13.1" lengthAdjust="spacingAndGlyphs">Part</text>
<text x="37.1" y="205.1" font-size="7.6" fill="#e6e6f0" font-family="Liberation Sans" textLength="16.8" lengthAdjust="spacingAndGlyphs">Main</text>
<text x="37.1" y="217.9" font-size="7.6" fill="#e6e6f0" font-family="Liberation Sans" textLength="60.4" lengthAdjust="spacingAndGlyphs">Car_hood Settings</text>
<text x="37.1" y="230.7" font-size="7.6" fill="#e6e6f0" font-family="Liberation Sans" textLength="31.9" lengthAdjust="spacingAndGlyphs">Car_hood</text>
<rect x="622" y="180" width="271" height="283" rx="3" fill="#000" opacity="0.10" filter="url(#blur2)"/>
<rect x="626.1" y="183.1" width="263.3" height="275.6" fill="#f0f0f0" stroke="#6a6a90" stroke-width="0.6"/>
<rect x="626.4" y="183.4" width="262.7" height="14.2" fill="#fff"/>
<path d="M630.5 186.5 L637.5 186.5 L635 190 L635 194 L633 194 L633 190 Z" fill="#555"/>
<path d="M631 186.5 L637 186.5" stroke="#222" stroke-width="0.6"/>
<text x="639.9" y="192.6" font-size="6.6" fill="#9a9a9a" font-family="Liberation Sans" textLength="111.6" lengthAdjust="spacingAndGlyphs">Robot Machining Project: Car_hood Settings</text>
<g stroke="#9a9a9a" stroke-width="0.6" fill="none"><line x1="832" y1="190.3" x2="837.6" y2="190.3"/><rect x="853.8" y="187.3" width="5" height="5"/><path d="M875.8 187.3 L880.8 192.3 M880.8 187.3 L875.8 192.3"/></g>
<text x="633" y="211" font-size="6.3" fill="#1c2230" font-family="Liberation Sans" textLength="15.3" lengthAdjust="spacingAndGlyphs">Robot:</text>
<text x="633" y="221.7" font-size="6.3" fill="#1c2230" font-family="Liberation Sans" textLength="24.5" lengthAdjust="spacingAndGlyphs">Reference:</text>
<text x="633" y="232.4" font-size="6.3" fill="#1c2230" font-family="Liberation Sans" textLength="10.7" lengthAdjust="spacingAndGlyphs">Tool:</text>
<text x="633" y="241.6" font-size="6.3" fill="#1c2230" font-family="Liberation Sans" textLength="20.6" lengthAdjust="spacingAndGlyphs">Program:</text>
<text x="661" y="241.6" font-size="6.3" fill="#1c2230" font-family="Liberation Sans" textLength="21.7" lengthAdjust="spacingAndGlyphs">Car_hood</text>
<rect x="661.5999999999999" y="203.10000000000002" width="68.5" height="9.8" fill="#e5e5e5" stroke="#adadad" stroke-width="0.6"/>
<path d="M724.1 207.1 L725.9 208.9 L727.7 207.1" fill="none" stroke="#444" stroke-width="0.5"/>
<rect x="661.5999999999999" y="214.0" width="68.5" height="9.6" fill="#e5e5e5" stroke="#adadad" stroke-width="0.6"/>
<path d="M724.1 217.9 L725.9 219.7 L727.7 217.9" fill="none" stroke="#444" stroke-width="0.5"/>
<rect x="661.5999999999999" y="224.8" width="68.5" height="9.6" fill="#e5e5e5" stroke="#adadad" stroke-width="0.6"/>
<path d="M724.1 228.7 L725.9 230.5 L727.7 228.7" fill="none" stroke="#444" stroke-width="0.5"/>
<text x="672" y="210.3" font-size="6.3" fill="#1c2230" font-family="Liberation Sans" textLength="45.9" lengthAdjust="spacingAndGlyphs">Fanuc M-710iC/45M</text>
<text x="672" y="221.1" font-size="6.3" fill="#1c2230" font-family="Liberation Sans" textLength="48.2" lengthAdjust="spacingAndGlyphs">Machining Reference</text>
<text x="672" y="231.8" font-size="6.3" fill="#1c2230" font-family="Liberation Sans" textLength="16.8" lengthAdjust="spacingAndGlyphs">Spindle</text>
<path d="M665 204.5 L669.5 204.5 L670 206.5 L667 207.5 L668.5 211.5 L666 211.5 L665.2 208.5Z" fill="#e86a1a"/>
<circle cx="665.6" cy="217" r="1.6" fill="#40c040"/><path d="M667.5 215.5 L667.5 222 M665 221.5 L670 221.5" stroke="#777" stroke-width="0.5"/>
<path d="M664.5 227 L667 226 L670.5 231 L669 232.5 Z" fill="#9ab020"/><circle cx="665.8" cy="227.8" r="1.5" fill="#30c030"/>
<rect x="633.8" y="244.9" width="5.4" height="5.4" fill="#fff" stroke="#333" stroke-width="0.6"/>
<path d="M634.6 247.5 L636.2 249.3 L638.7 245.5" fill="none" stroke="#222" stroke-width="0.6"/>
<text x="641.4" y="249.9" font-size="6.3" fill="#1c2230" font-family="Liberation Sans" textLength="34.4" lengthAdjust="spacingAndGlyphs">Visible toolpath</text>
<path d="M636 255.3 L634 255.3 L634 301 M730.5 301 L730.5 255.3 L662 255.3" fill="none" stroke="#dcdcdc" stroke-width="0.7"/>
<text x="637" y="257.6" font-size="6.3" fill="#1c2230" font-family="Liberation Sans" textLength="24" lengthAdjust="spacingAndGlyphs">Path input</text>
<rect x="636.3" y="262.0" width="45.7" height="9.4" fill="#e5e5e5" stroke="#adadad" stroke-width="0.6"/>
<path d="M676.0 265.8 L677.8 267.6 L679.6 265.8" fill="none" stroke="#444" stroke-width="0.5"/>
<text x="638" y="269" font-size="6.3" fill="#1c2230" font-family="Liberation Sans" textLength="29" lengthAdjust="spacingAndGlyphs">Select NC file</text>
<rect x="685.3" y="262.0" width="42.2" height="9.4" fill="#e1e1e1" stroke="#adadad" stroke-width="0.6"/>
<text x="691.8" y="269" font-size="6.3" fill="#1a1a1a" font-family="Liberation Sans" textLength="30.2" lengthAdjust="spacingAndGlyphs">Select NC file</text>
<text x="635.4" y="280.1" font-size="6.3" fill="#1c2230" font-family="Liberation Sans" textLength="41.6" lengthAdjust="spacingAndGlyphs">Path points:  1097</text>
<text x="635.4" y="286.6" font-size="6.3" fill="#1c2230" font-family="Liberation Sans" textLength="60.7" lengthAdjust="spacingAndGlyphs">Original file: Car hood.NCI</text>
<rect x="636.3" y="290.0" width="91.2" height="9.3" fill="#e1e1e1" stroke="#adadad" stroke-width="0.6"/>
<text x="663" y="297.3" font-size="6.3" fill="#1a1a1a" font-family="Liberation Sans" textLength="36.6" lengthAdjust="spacingAndGlyphs">Program Events</text>
<text x="763.2" y="212.1" font-size="6.3" fill="#1c2230" font-family="Liberation Sans" textLength="21.7" lengthAdjust="spacingAndGlyphs">Approach</text>
<rect x="803.8" y="204.70000000000002" width="38.1" height="9.9" fill="#e1e1e1" stroke="#adadad" stroke-width="0.6"/>
<text x="818.2" y="212.1" font-size="6.3" fill="#1a1a1a" font-family="Liberation Sans" textLength="8.8" lengthAdjust="spacingAndGlyphs">Add</text>
<rect x="844.0999999999999" y="204.70000000000002" width="37.4" height="9.9" fill="#e1e1e1" stroke="#adadad" stroke-width="0.6"/>
<text x="853.1" y="212.1" font-size="6.3" fill="#1a1a1a" font-family="Liberation Sans" textLength="18.6" lengthAdjust="spacingAndGlyphs">Remove</text>
<rect x="762" y="215.2" width="121.6" height="38" fill="#fff" stroke="#adadad" stroke-width="0.6"/>
<line x1="810.5" y1="215.5" x2="810.5" y2="237" stroke="#f0f0f0" stroke-width="0.6"/><line x1="844.3" y1="215.5" x2="844.3" y2="237" stroke="#f0f0f0" stroke-width="0.6"/><line x1="762" y1="237" x2="844.3" y2="237" stroke="#f0f0f0" stroke-width="0.6"/>
<text x="779.1" y="223.4" font-size="6.3" fill="#1c2230" font-family="Liberation Sans" textLength="14.8" lengthAdjust="spacingAndGlyphs">mode</text>
<text x="812.8" y="223.4" font-size="6.3" fill="#1c2230" font-family="Liberation Sans" textLength="29.4" lengthAdjust="spacingAndGlyphs">value (mm)</text>
<rect x="762.6999999999999" y="226.70000000000002" width="46.7" height="9.9" fill="#e5e5e5" stroke="#adadad" stroke-width="0.6"/>
<path d="M803.4 230.75 L805.2 232.55 L807.0 230.75" fill="none" stroke="#444" stroke-width="0.5"/>
<text x="764.3" y="234.3" font-size="6.3" fill="#1c2230" font-family="Liberation Sans" textLength="30.7" lengthAdjust="spacingAndGlyphs">normal (n+)</text>
<text x="821" y="234.3" font-size="6.3" fill="#1c2230" font-family="Liberation Sans" textLength="12.7" lengthAdjust="spacingAndGlyphs">100.0</text>
<text x="763.2" y="262.1" font-size="6.3" fill="#1c2230" font-family="Liberation Sans" textLength="17" lengthAdjust="spacingAndGlyphs">Retract</text>
<rect x="803.8" y="255.0" width="38.1" height="9.5" fill="#e1e1e1" stroke="#adadad" stroke-width="0.6"/>
<text x="818.2" y="262.1" font-size="6.3" fill="#1a1a1a" font-family="Liberation Sans" textLength="8.8" lengthAdjust="spacingAndGlyphs">Add</text>
<rect x="844.0999999999999" y="255.0" width="37.4" height="9.5" fill="#e1e1e1" stroke="#adadad" stroke-width="0.6"/>
<text x="853.1" y="262.1" font-size="6.3" fill="#1a1a1a" font-family="Liberation Sans" textLength="18.6" lengthAdjust="spacingAndGlyphs">Remove</text>
<rect x="762" y="265.6" width="121.6" height="40" fill="#fff" stroke="#adadad" stroke-width="0.6"/>
<line x1="810.5" y1="266" x2="810.5" y2="287" stroke="#f0f0f0" stroke-width="0.6"/><line x1="844.3" y1="266" x2="844.3" y2="287" stroke="#f0f0f0" stroke-width="0.6"/><line x1="762" y1="287" x2="844.3" y2="287" stroke="#f0f0f0" stroke-width="0.6"/>
<text x="779.1" y="273.8" font-size="6.3" fill="#1c2230" font-family="Liberation Sans" textLength="14.8" lengthAdjust="spacingAndGlyphs">mode</text>
<text x="812.8" y="273.8" font-size="6.3" fill="#1c2230" font-family="Liberation Sans" textLength="29.4" lengthAdjust="spacingAndGlyphs">value (mm)</text>
<rect x="762.6999999999999" y="277.0" width="46.7" height="9.2" fill="#e5e5e5" stroke="#adadad" stroke-width="0.6"/>
<path d="M803.4 280.7 L805.2 282.5 L807.0 280.7" fill="none" stroke="#444" stroke-width="0.5"/>
<text x="764.3" y="283.9" font-size="6.3" fill="#1c2230" font-family="Liberation Sans" textLength="30.7" lengthAdjust="spacingAndGlyphs">normal (n+)</text>
<text x="821" y="283.9" font-size="6.3" fill="#1c2230" font-family="Liberation Sans" textLength="12.7" lengthAdjust="spacingAndGlyphs">100.0</text>
<path d="M631.9 348 L631.9 382.7 L883.7 382.7 L883.7 348" fill="none" stroke="#dcdcdc" stroke-width="0.7"/>
<text x="636" y="350" font-size="6.3" fill="#1c2230" font-family="Liberation Sans" textLength="52" lengthAdjust="spacingAndGlyphs">Optimization parameters</text>
<rect x="629.5" y="304.5" width="258" height="39" rx="6" fill="#f0f0f0"/>
<rect x="630" y="305" width="257" height="38" rx="6" fill="none" stroke="#c4c4c4" stroke-width="2.5" filter="url(#blur1)"/>
<text x="631.5" y="320.4" font-size="6.3" fill="#1c2230" font-family="Liberation Sans" textLength="43.5" lengthAdjust="spacingAndGlyphs">Path to tool offset:</text>
<rect x="677.5999999999999" y="308.3" width="161.5" height="8.0" fill="#e5e5e5" stroke="#adadad" stroke-width="0.6"/>
<path d="M833.1 311.4 L834.9 313.2 L836.7 311.4" fill="none" stroke="#444" stroke-width="0.5"/>
<text x="678.4" y="314.6" font-size="5.4" fill="#1c2230" font-family="Liberation Mono" font-weight="bold" textLength="152.3" lengthAdjust="spacingAndGlyphs">[X,Y,Z]mm | Rot[X,Y ,Z  ]deg - Fanuc/Motoman (default</text>
<rect x="842.0999999999999" y="308.0" width="11.3" height="8.9" fill="#e1e1e1" stroke="#adadad" stroke-width="0.6"/>
<rect x="856.6999999999999" y="308.0" width="11.4" height="8.9" fill="#e1e1e1" stroke="#adadad" stroke-width="0.6"/>
<rect x="872.1999999999999" y="308.0" width="11.3" height="8.9" fill="#e1e1e1" stroke="#adadad" stroke-width="0.6"/>
<path d="M860 309.5 L864 309.5 L865.5 311 L865.5 315.5 L860 315.5Z" fill="#fff" stroke="#e08020" stroke-width="0.8"/>
<g stroke="#111" stroke-width="1"><line x1="874.5" y1="310" x2="881.2" y2="310"/><line x1="874.5" y1="312.4" x2="881.2" y2="312.4"/><line x1="874.5" y1="314.8" x2="881.2" y2="314.8"/></g>
<rect x="845" y="310" width="5" height="5" fill="none" stroke="#d0d0d0" stroke-width="0.6"/>
<rect x="677.3" y="318.4" width="206.5" height="9.1" fill="#fff" stroke="#7a7a7a" stroke-width="0.5"/>
<text x="678.4" y="325.3" font-size="5.4" fill="#1c2230" font-family="Liberation Mono" font-weight="bold" textLength="19.6" lengthAdjust="spacingAndGlyphs">rotz(0)</text>
<text x="631.5" y="337.6" font-size="6.3" fill="#1c2230" font-family="Liberation Sans" textLength="38.2" lengthAdjust="spacingAndGlyphs">Select algorithm:</text>
<rect x="671.5" y="331.3" width="85.1" height="8.4" fill="#e5e5e5" stroke="#adadad" stroke-width="0.6"/>
<path d="M750.6 334.6 L752.4 336.4 L754.2 334.6" fill="none" stroke="#444" stroke-width="0.5"/>
<text x="672.8" y="337.6" font-size="6.3" fill="#1c2230" font-family="Liberation Sans" textLength="73.8" lengthAdjust="spacingAndGlyphs">Minimum tool orientation change</text>
<rect x="759.8" y="330.1" width="33.4" height="9.4" fill="#e1e1e1" stroke="#adadad" stroke-width="0.6"/>
<text x="769" y="337.4" font-size="6.3" fill="#1a1a1a" font-family="Liberation Sans" textLength="14.2" lengthAdjust="spacingAndGlyphs">Teach</text>
<path d="M801.3 331 h1.8 v3.1 h3.1 v1.8 h-3.1 v3.1 h-1.8 v-3.1 h-3.1 v-1.8 h3.1Z" fill="#1a6ec8"/>
<rect x="813.5999999999999" y="330.1" width="69.9" height="9.6" fill="#e1e1e1" stroke="#adadad" stroke-width="0.6"/>
<circle cx="818.4" cy="335" r="2.6" fill="#fff" stroke="#333" stroke-width="0.55"/>
<text x="823.6" y="337.5" font-size="6.3" fill="#1c2230" font-family="Liberation Sans" textLength="58.6" lengthAdjust="spacingAndGlyphs">Show preferred tool path</text>
<rect x="629.1" y="303.4" width="259.5" height="41.1" rx="9" fill="none" stroke="#e87b28" stroke-width="4.6"/>
<rect x="637.0999999999999" y="355.8" width="34.0" height="8.4" fill="#e1e1e1" stroke="#adadad" stroke-width="0.6"/>
<text x="641.4" y="362.3" font-size="6.3" fill="#1a1a1a" font-family="Liberation Sans" textLength="25.4" lengthAdjust="spacingAndGlyphs">Set default</text>
<rect x="808.4" y="355.8" width="69.9" height="9.0" fill="#e1e1e1" stroke="#adadad" stroke-width="0.6"/>
<circle cx="813.2" cy="360.3" r="2.6" fill="#fff" stroke="#333" stroke-width="0.55"/>
<text x="818.6" y="362.6" font-size="6.3" fill="#1c2230" font-family="Liberation Sans" textLength="58.2" lengthAdjust="spacingAndGlyphs">Show estimated tool path</text>
<text x="636.3" y="375.9" font-size="6.3" fill="#1c2230" font-family="Liberation Sans" textLength="66" lengthAdjust="spacingAndGlyphs">Allow a tool Z rotation of +/-</text>
<rect x="704.8" y="369.3" width="27.2" height="8.6" fill="#fff" stroke="#adadad" stroke-width="0.6"/>
<rect x="726.8" y="369.6" width="5" height="8.0" fill="#e8e8e8"/>
<path d="M728.0 372.6 L729.3 371.0 L730.6 372.6Z M728.0 374.6 L729.3 376.2 L730.6 374.6Z" fill="#333"/>
<text x="706" y="375.9" font-size="6.3" fill="#1a1a1a" font-family="Liberation Sans" textLength="16.3" lengthAdjust="spacingAndGlyphs">180.00</text>
<text x="735" y="375.9" font-size="6.3" fill="#1c2230" font-family="Liberation Sans" textLength="35.5" lengthAdjust="spacingAndGlyphs">deg by steps of</text>
<rect x="774.3" y="369.3" width="28.0" height="8.6" fill="#fff" stroke="#adadad" stroke-width="0.6"/>
<rect x="797.1" y="369.6" width="5" height="8.0" fill="#e8e8e8"/>
<path d="M798.3 372.6 L799.6 371.0 L800.9 372.6Z M798.3 374.6 L799.6 376.2 L800.9 374.6Z" fill="#333"/>
<text x="778.6" y="375.9" font-size="6.3" fill="#1a1a1a" font-family="Liberation Sans" textLength="13.7" lengthAdjust="spacingAndGlyphs">20.00</text>
<text x="805" y="375.9" font-size="6.3" fill="#1c2230" font-family="Liberation Sans" textLength="8.5" lengthAdjust="spacingAndGlyphs">deg</text>
<path d="M633 389 L631.9 389 L631.9 425.5 L883.7 425.5 L883.7 389 L716 389" fill="none" stroke="#dcdcdc" stroke-width="0.7"/>
<text x="635.5" y="391.2" font-size="6.3" fill="#1c2230" font-family="Liberation Sans" textLength="78.5" lengthAdjust="spacingAndGlyphs">Preferred joints for the start point</text>
<rect x="636.5999999999999" y="398.8" width="34.8" height="8.2" fill="#fff" stroke="#adadad" stroke-width="0.6"/>
<rect x="666.2" y="399.1" width="5" height="7.6" fill="#e8e8e8"/>
<path d="M667.4 401.9 L668.7 400.3 L670.0 401.9Z M667.4 403.9 L668.7 405.5 L670.0 403.9Z" fill="#333"/>
<text x="638.1999999999999" y="405.2" font-size="6.3" fill="#1a1a1a" font-family="Liberation Sans" textLength="15.2" lengthAdjust="spacingAndGlyphs">0.0000</text>
<rect x="672.5999999999999" y="398.8" width="34.8" height="8.2" fill="#fff" stroke="#adadad" stroke-width="0.6"/>
<rect x="702.2" y="399.1" width="5" height="7.6" fill="#e8e8e8"/>
<path d="M703.4 401.9 L704.7 400.3 L706.0 401.9Z M703.4 403.9 L704.7 405.5 L706.0 403.9Z" fill="#333"/>
<text x="674.1999999999999" y="405.2" font-size="6.3" fill="#1a1a1a" font-family="Liberation Sans" textLength="15.2" lengthAdjust="spacingAndGlyphs">0.0000</text>
<rect x="709.0" y="398.8" width="32.7" height="8.2" fill="#fff" stroke="#adadad" stroke-width="0.6"/>
<rect x="736.5" y="399.1" width="5" height="7.6" fill="#e8e8e8"/>
<path d="M737.7 401.9 L739.0 400.3 L740.3 401.9Z M737.7 403.9 L739.0 405.5 L740.3 403.9Z" fill="#333"/>
<text x="710.6" y="405.2" font-size="6.3" fill="#1a1a1a" font-family="Liberation Sans" textLength="15.2" lengthAdjust="spacingAndGlyphs">0.0000</text>
<rect x="743.3" y="398.8" width="35.2" height="8.2" fill="#fff" stroke="#adadad" stroke-width="0.6"/>
<rect x="773.3" y="399.1" width="5" height="7.6" fill="#e8e8e8"/>
<path d="M774.5 401.9 L775.8 400.3 L777.1 401.9Z M774.5 403.9 L775.8 405.5 L777.1 403.9Z" fill="#333"/>
<text x="744.9" y="405.2" font-size="6.3" fill="#1a1a1a" font-family="Liberation Sans" textLength="15.2" lengthAdjust="spacingAndGlyphs">0.0000</text>
<rect x="780.0999999999999" y="398.8" width="34.4" height="8.2" fill="#fff" stroke="#adadad" stroke-width="0.6"/>
<rect x="809.3" y="399.1" width="5" height="7.6" fill="#e8e8e8"/>
<path d="M810.5 401.9 L811.8 400.3 L813.1 401.9Z M810.5 403.9 L811.8 405.5 L813.1 403.9Z" fill="#333"/>
<text x="781.6999999999999" y="405.2" font-size="6.3" fill="#1a1a1a" font-family="Liberation Sans" textLength="15.2" lengthAdjust="spacingAndGlyphs">0.0000</text>
<rect x="816.0999999999999" y="398.8" width="34.8" height="8.2" fill="#fff" stroke="#adadad" stroke-width="0.6"/>
<rect x="845.7" y="399.1" width="5" height="7.6" fill="#e8e8e8"/>
<path d="M846.9 401.9 L848.2 400.3 L849.5 401.9Z M846.9 403.9 L848.2 405.5 L849.5 403.9Z" fill="#333"/>
<text x="817.6999999999999" y="405.2" font-size="6.3" fill="#1a1a1a" font-family="Liberation Sans" textLength="15.2" lengthAdjust="spacingAndGlyphs">0.0000</text>
<rect x="852.8" y="398.5" width="11.9" height="8.9" fill="#e1e1e1" stroke="#adadad" stroke-width="0.6"/>
<rect x="856" y="400.5" width="5" height="5" fill="none" stroke="#d4d4d4" stroke-width="0.6"/>
<rect x="866.9" y="398.5" width="11.2" height="8.9" fill="#e1e1e1" stroke="#adadad" stroke-width="0.6"/>
<path d="M869.5 400.2 L873.5 400.2 L875 401.7 L875 406 L869.5 406Z" fill="#fff" stroke="#e08020" stroke-width="0.8"/>
<rect x="637.0999999999999" y="412.1" width="34.0" height="8.9" fill="#e1e1e1" stroke="#adadad" stroke-width="0.6"/>
<text x="641.4" y="418.8" font-size="6.3" fill="#1a1a1a" font-family="Liberation Sans" textLength="25.4" lengthAdjust="spacingAndGlyphs">Set default</text>
<rect x="673.5" y="412.1" width="33.0" height="8.9" fill="#e1e1e1" stroke="#adadad" stroke-width="0.6"/>
<text x="676.5" y="418.8" font-size="6.3" fill="#1a1a1a" font-family="Liberation Sans" textLength="26.3" lengthAdjust="spacingAndGlyphs">Set current</text>
<rect x="708.0" y="412.1" width="170.9" height="8.9" fill="#e5e5e5" stroke="#adadad" stroke-width="0.6"/>
<path d="M872.9 415.65 L874.7 417.45 L876.5 415.65" fill="none" stroke="#444" stroke-width="0.5"/>
<text x="718.5" y="418.8" font-size="5.4" fill="#1c2230" font-family="Liberation Mono" font-weight="bold" textLength="13.8" lengthAdjust="spacingAndGlyphs">31.0,</text>
<text x="747" y="418.8" font-size="5.4" fill="#1c2230" font-family="Liberation Mono" font-weight="bold" textLength="10.5" lengthAdjust="spacingAndGlyphs">5.3,</text>
<text x="767.3" y="418.8" font-size="5.4" fill="#1c2230" font-family="Liberation Mono" font-weight="bold" textLength="16.4" lengthAdjust="spacingAndGlyphs">-62.1,</text>
<text x="792.9" y="418.8" font-size="5.4" fill="#1c2230" font-family="Liberation Mono" font-weight="bold" textLength="16.3" lengthAdjust="spacingAndGlyphs">-96.4,</text>
<text x="818.4" y="418.8" font-size="5.4" fill="#1c2230" font-family="Liberation Mono" font-weight="bold" textLength="16.4" lengthAdjust="spacingAndGlyphs">-16.8,</text>
<text x="846.9" y="418.8" font-size="5.4" fill="#1c2230" font-family="Liberation Mono" font-weight="bold" textLength="11.5" lengthAdjust="spacingAndGlyphs">44.0</text>
<rect x="631.6999999999999" y="432.2" width="6.0" height="6.0" fill="#fff" stroke="#333" stroke-width="0.6"/>
<text x="640" y="437.3" font-size="6.3" fill="#1c2230" font-family="Liberation Sans" textLength="27.8" lengthAdjust="spacingAndGlyphs">auto update</text>
<text x="631.1" y="450.3" font-size="6.3" fill="#1c2230" font-family="Liberation Sans" textLength="56.6" lengthAdjust="spacingAndGlyphs">Path solved successfully.</text>
<circle cx="794.5" cy="442.1" r="11" fill="url(#gGreen)"/>
<path d="M788 442.5 L792.5 448 L801 435.5 L797.5 437.5 L792.3 444 L790.5 441Z" fill="#fff"/>
<rect x="810.6999999999999" y="431.3" width="33.6" height="20.8" fill="#e1e1e1" stroke="#adadad" stroke-width="0.6"/>
<text x="818.8" y="444.3" font-size="6.3" fill="#1a1a1a" font-family="Liberation Sans" textLength="16.6" lengthAdjust="spacingAndGlyphs">Update</text>
<rect x="849.3" y="431.3" width="34.0" height="20.8" fill="#e1e1e1" stroke="#adadad" stroke-width="0.6"/>
<text x="855.6" y="444.3" font-size="6.3" fill="#1a1a1a" font-family="Liberation Sans" textLength="19.6" lengthAdjust="spacingAndGlyphs">Simulate</text>
<g id="bottom">
<rect x="0" y="469" width="916" height="26" fill="#f0f0f0"/>
<line x1="0" y1="469.5" x2="916" y2="469.5" stroke="#f8f8f8" stroke-width="1"/>
<g fill="#e4e4e4" stroke="#c4c4c4" stroke-width="0.5">
<rect x="2" y="472.7" width="12.2" height="9.8"/>
<rect x="16.4" y="472.7" width="12.4" height="9.8"/>
<rect x="31.4" y="472.7" width="12.5" height="9.8"/>
<rect x="46.1" y="472.7" width="12.6" height="9.8"/>
<rect x="61" y="472.7" width="12.4" height="9.8"/>
<rect x="75.8" y="472.7" width="12.7" height="9.8"/>
</g>
<g fill="#4aaae8">
<rect x="5.5" y="475" width="1" height="5"/><path d="M11 475 L7 477.5 L11 480Z"/>
<rect x="20.5" y="475" width="1.6" height="5"/><rect x="23.2" y="475" width="1.6" height="5"/>
<path d="M35.5 475 L40.5 477.5 L35.5 480Z"/>
<path d="M49 475 L52.5 477.5 L49 480Z M52.5 475 L56 477.5 L52.5 480Z"/>
<path d="M63.8 475 L68.3 477.5 L63.8 480Z"/><rect x="68.6" y="475" width="1" height="5"/>
<path d="M78.5 479 Q80 474.5 83.5 475.5 L84.5 476.5" fill="none" stroke="#1a70c0" stroke-width="1.2"/>
<path d="M83 478.5 L86 478.5 L85 475.5Z" fill="#1a70c0"/>
</g>
<rect x="90.5" y="475.9" width="714" height="3.4" fill="#e2e2e2"/><rect x="90.5" y="475.9" width="714" height="0.8" fill="#eaeaea"/>
<rect x="319.2" y="472.5" width="4.8" height="10.2" fill="#0a74dc"/>
<rect x="807.4" y="473.4" width="23" height="9" fill="#fff" stroke="#adadad" stroke-width="0.5"/>
<rect x="825" y="473.8" width="5.2" height="8.2" fill="#eee"/>
<path d="M826.4 477.3 L827.6 475 L828.8 477.3Z M826.4 478.6 L827.6 480.9 L828.8 478.6Z" fill="#333"/>
<text x="809.5" y="480.3" font-size="5.4" font-family="Liberation Sans" fill="#222" textLength="10.5" lengthAdjust="spacingAndGlyphs">2385</text>
<text x="831" y="480" font-size="6" font-weight="bold" font-family="Liberation Sans" fill="#111" textLength="26" lengthAdjust="spacingAndGlyphs">Car_hood</text>
<text x="858" y="480" font-size="5.7" font-family="Liberation Sans" fill="#222" textLength="32" lengthAdjust="spacingAndGlyphs">time: 2m 7.3s</text>
<rect x="900.5" y="472" width="13" height="11" fill="#e8e8e8" stroke="#c8c8c8" stroke-width="0.5"/>
<path d="M904.3 474.8 L910.7 481 M910.7 474.8 L904.3 481" stroke="#d82020" stroke-width="1.8"/>
</g>
</svg>
</body></html>
